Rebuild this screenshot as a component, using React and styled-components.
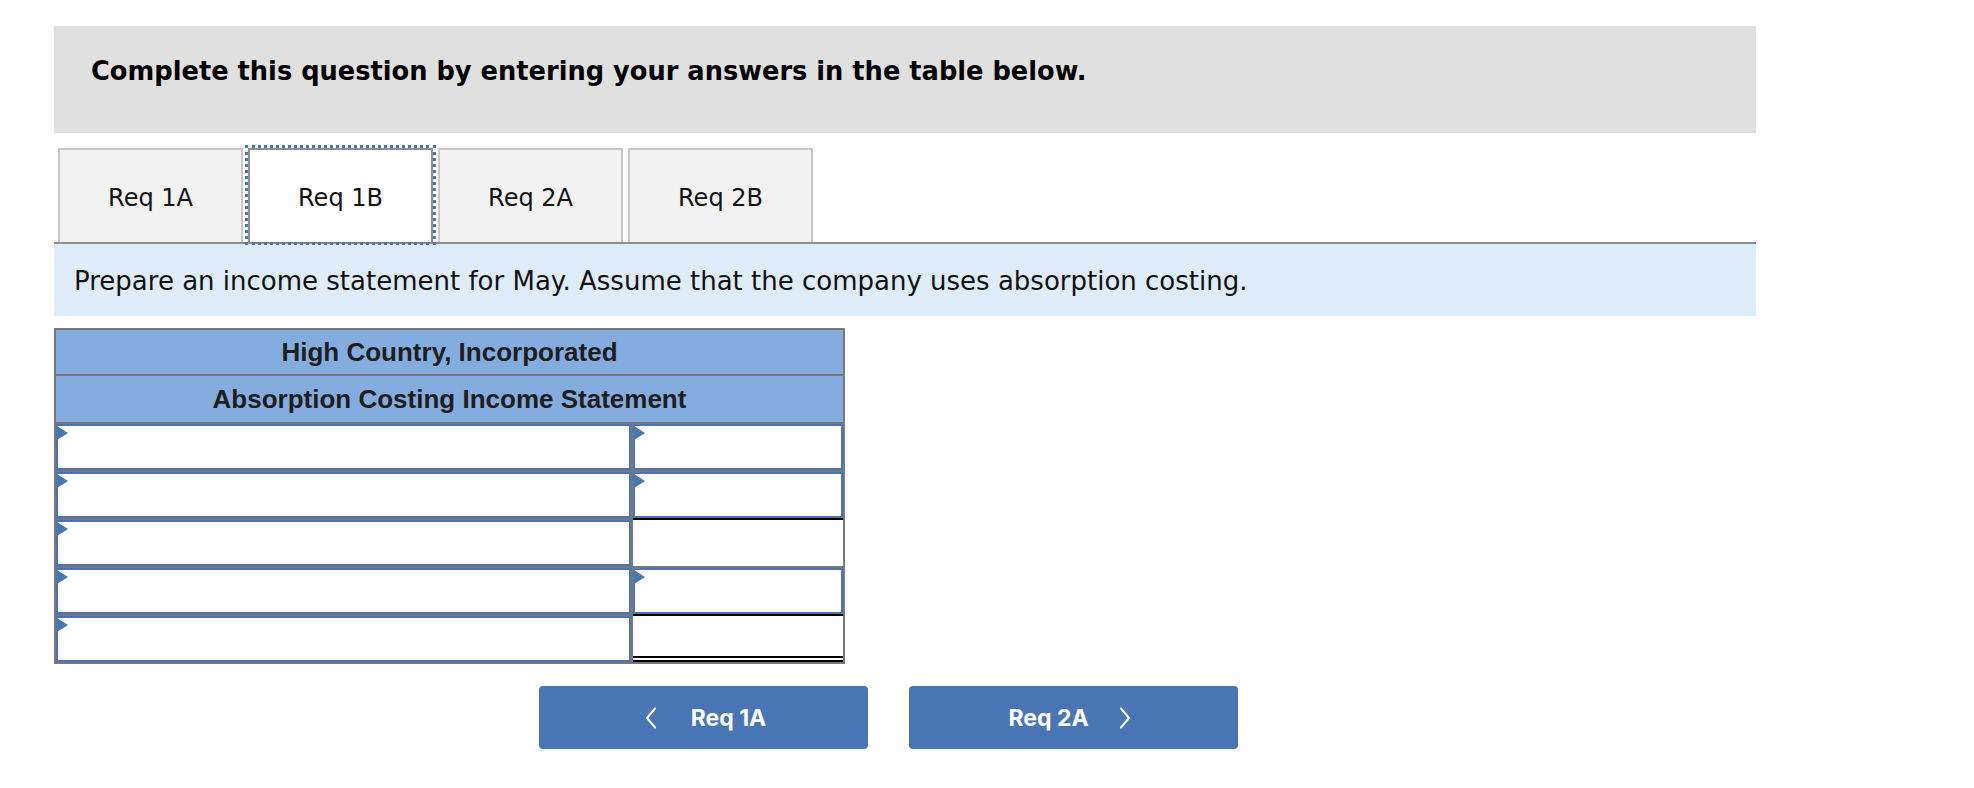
import { styled, createGlobalStyle } from "styled-components";

const GlobalStyle = createGlobalStyle`
  body {
    margin: 0;
    background: #ffffff;
    font-family: "DejaVu Sans", Verdana, sans-serif;
    color: #000;
  }
  * {
    box-sizing: border-box;
  }
`;

const tabs = ["Req 1A", "Req 1B", "Req 2A", "Req 2B"];

// which cells of the second column are inputs, and which carry a total line
const rows = [
  { amount: "input" },
  { amount: "input" },
  { amount: "total" },
  { amount: "input" },
  { amount: "grand" },
];

const Chevron = ({ dir }) => (
  <svg width="12" height="22" viewBox="0 0 12 22" fill="none">
    <polyline
      points={dir === "left" ? "10,1.5 2,11 10,20.5" : "2,1.5 10,11 2,20.5"}
      stroke="#ffffff"
      strokeWidth="2"
      strokeLinecap="round"
      strokeLinejoin="round"
    />
  </svg>
);

const App = () => {
  return (
    <>
      <GlobalStyle />
      <Page>
        <Banner>Complete this question by entering your answers in the table below.</Banner>

        <TabBar>
          {tabs.map((label, idx) => (
            <Tab key={label} $active={idx === 1}>
              {label}
            </Tab>
          ))}
        </TabBar>

        <Instructions>
          Prepare an income statement for May. Assume that the company uses absorption costing.
        </Instructions>

        <Statement>
          <HeaderRow>High Country, Incorporated</HeaderRow>
          <HeaderRow>Absorption Costing Income Statement</HeaderRow>
          <Body>
            {rows.map((row, idx) => (
              <Row key={idx}>
                <Field>
                  <Marker />
                  <Input />
                </Field>
                {row.amount === "input" ? (
                  <Field>
                    <Marker />
                    <Input />
                  </Field>
                ) : (
                  <TotalCell $double={row.amount === "grand"} />
                )}
              </Row>
            ))}
          </Body>
        </Statement>

        <NavRow>
          <NavButton>
            <Chevron dir="left" />
            <span>Req 1A</span>
          </NavButton>
          <NavButton $next>
            <span>Req 2A</span>
            <Chevron dir="right" />
          </NavButton>
        </NavRow>
      </Page>
    </>
  );
};

const Page = styled.div`
  width: 1756px;
  padding: 26px 0 0 54px;
`;

const Banner = styled.div`
  height: 107px;
  background: #e0e0e0;
  padding: 30px 0 0 37px;
  font-family: "DejaVu Sans", Verdana, sans-serif;
  font-weight: bold;
  font-size: 25.7px;
  line-height: 30px;
  color: #000;
`;

const TabBar = styled.div`
  display: flex;
  gap: 5px;
  margin-top: 15px;
  padding-left: 4px;
  border-bottom: 2px solid #8c8c8c;
`;

const Tab = styled.div`
  width: 185px;
  height: 94px;
  display: flex;
  align-items: center;
  justify-content: center;
  padding-top: 4px;
  font-size: 24px;
  color: #111;
  background: ${(p) => (p.$active ? "#ffffff" : "#f2f2f2")};
  border: 2px solid ${(p) => (p.$active ? "#8e8e8e" : "#c8c8c8")};
  border-bottom: none;
  outline: ${(p) => (p.$active ? "3px dotted #4a74b4" : "none")};
  outline-offset: 0;
`;

const Instructions = styled.div`
  height: 72px;
  display: flex;
  align-items: center;
  padding: 2px 0 0 20px;
  background: #deebf8;
  font-size: 26px;
  color: #111;
`;

const Statement = styled.div`
  width: 791px;
  margin-top: 12px;
  border: 2px solid #787878;
  background: #787878;
`;

const HeaderRow = styled.div`
  height: 48px;
  display: flex;
  align-items: center;
  justify-content: center;
  background: #84acdf;
  border-bottom: 2px solid #787878;
  font-family: "Liberation Sans", Arial, sans-serif;
  font-weight: bold;
  font-size: 26px;
  color: #1e1e1e;

  &:first-child {
    height: 46px;
  }
`;

const Body = styled.div`
  display: grid;
  row-gap: 2px;
`;

const Row = styled.div`
  display: grid;
  grid-template-columns: 575px 210px;
  column-gap: 2px;
  height: 46px;
`;

const Field = styled.div`
  position: relative;
  height: 100%;
`;

const Marker = styled.span`
  position: absolute;
  top: 2px;
  left: 1px;
  width: 11px;
  height: 14px;
  background: #4a74b4;
  clip-path: polygon(0 0, 100% 50%, 0 100%);
`;

const Input = styled.input`
  display: block;
  width: 100%;
  height: 100%;
  margin: 0;
  padding: 0 10px;
  border: 2px solid #4a74b4;
  background: #ffffff;
  font-family: "DejaVu Sans", Verdana, sans-serif;
  font-size: 18px;
  outline: none;
`;

const TotalCell = styled.div`
  margin-top: -2px;
  height: 48px;
  background: #ffffff;
  border-top: 2px solid #000;
  border-bottom: ${(p) => (p.$double ? "6px double #000" : "none")};
`;

const NavRow = styled.div`
  display: flex;
  gap: 41px;
  margin-top: 22px;
  padding-left: 485px;
`;

const NavButton = styled.button`
  width: 329px;
  height: 63px;
  display: flex;
  align-items: center;
  justify-content: center;
  gap: ${(p) => (p.$next ? "30px" : "34px")};
  padding: ${(p) => (p.$next ? "0 8px 0 0" : "0 0 0 4px")};
  border: none;
  border-radius: 4px;
  background: #4a75b4;
  color: #ffffff;
  font-family: Inter, "Liberation Sans", sans-serif;
  font-weight: 700;
  font-size: 23px;
  cursor: pointer;
`;

export default App;
